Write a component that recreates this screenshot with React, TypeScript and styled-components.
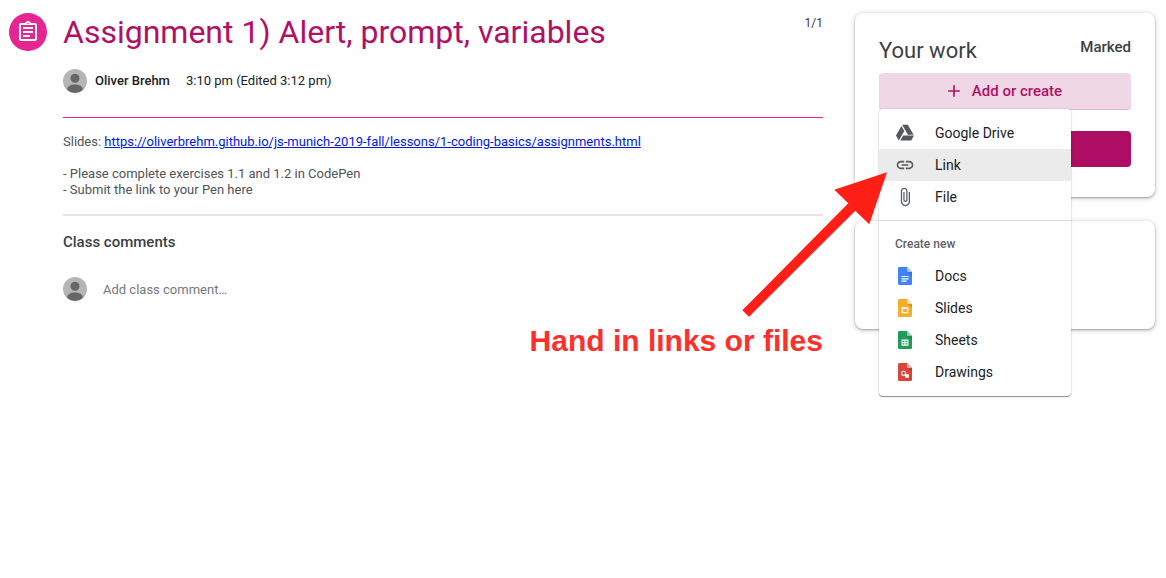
import React from "react";
import styled, { createGlobalStyle } from "styled-components";
import { MdOutlineAssignment, MdLink, MdAttachFile, MdAdd } from "react-icons/md";

const text = `Roboto, "Liberation Sans", sans-serif`;

const GlobalStyle = createGlobalStyle`
  *, *::before, *::after { box-sizing: border-box; }
  body { margin: 0; background: #fff; color: #202124; font-family: ${text}; font-size: 14px; }
  h1, h2, p { margin: 0; }
  button, input { font: inherit; }
`;

const Page = styled.div`
  display: flex;
  align-items: flex-start;
  gap: 32px;
  min-height: 100vh;
  padding: 12px 11px 24px 9px;
`;

const Main = styled.main`
  flex: 1;
  min-width: 0;
  display: flex;
  gap: 16px;
`;

const Badge = styled.span`
  flex: none;
  display: flex;
  align-items: center;
  justify-content: center;
  width: 38px;
  height: 38px;
  margin-top: 1px;
  border-radius: 50%;
  background: #e52592;
  color: #fff;
`;

const Content = styled.div`
  flex: 1;
  min-width: 0;
`;

const TitleRow = styled.header`
  display: flex;
  justify-content: space-between;
  align-items: flex-start;
`;

const Title = styled.h1`
  font-size: 32px;
  font-weight: 400;
  line-height: 40px;
  color: #b01065;
`;

const Score = styled.span`
  font-size: 12px;
  line-height: 22px;
  color: #3c4043;
`;

const Meta = styled.div`
  display: flex;
  align-items: center;
  margin-top: 17px;
  padding-bottom: 24px;
  border-bottom: 1px solid #e52592;
  font-size: 13px;
  line-height: 24px;
`;

const AvatarIcon = styled.svg`
  flex: none;
  width: 24px;
  height: 24px;
`;

const Author = styled.span`
  margin: 0 16px 0 8px;
  font-weight: 500;
`;

const Instructions = styled.section`
  padding: 16px 0;
  border-bottom: 2px solid #e4e5ea;
  font-size: 13px;
  line-height: 16px;
  color: #505357;
`;

const Paragraph = styled.p`
  & + & { margin-top: 16px; }
`;

const SlidesLink = styled.a`
  color: #0019e0;
`;

const CommentsTitle = styled.h2`
  margin: 16px 0 25px;
  font-size: 15px;
  font-weight: 500;
  line-height: 20px;
  color: #3c4043;
`;

const CommentForm = styled.form`
  display: flex;
  align-items: center;
  gap: 16px;
`;

const CommentInput = styled.input`
  flex: 1;
  min-width: 0;
  height: 24px;
  padding: 0;
  border: 0;
  outline: 0;
  background: none;
  color: #3c4043;
  font-size: 13px;
  &::placeholder { color: #75787c; opacity: 1; }
`;

const Sidebar = styled.aside`
  flex: none;
  display: flex;
  flex-direction: column;
  gap: 24px;
  width: 300px;
  padding-top: 1px;
`;

const Card = styled.section`
  border-radius: 8px;
  background: #fff;
  box-shadow: 0 1px 2px rgba(60, 64, 67, 0.4), 0 1px 5px 1px rgba(60, 64, 67, 0.18);
`;

const WorkCard = styled(Card)`
  padding: 24px 24px 30px;
`;

const CommentsCard = styled(Card)`
  min-height: 108px;
`;

const CardHeader = styled.div`
  display: flex;
  justify-content: space-between;
  align-items: flex-start;
  height: 36px;
`;

const CardTitle = styled.h2`
  font-size: 22px;
  font-weight: 400;
  line-height: 28px;
  color: #3c4043;
`;

const Status = styled.span`
  font-size: 15px;
  font-weight: 500;
  line-height: 20px;
  color: #3c4043;
`;

const MenuAnchor = styled.div`
  position: relative;
`;

const WideButton = styled.button<{ $filled?: boolean }>`
  display: flex;
  align-items: center;
  justify-content: center;
  gap: 8px;
  width: 100%;
  height: 36px;
  padding: 0 4px 0 0;
  border: 0;
  border-radius: 4px;
  font-size: 15px;
  font-weight: 500;
  color: ${(p) => (p.$filled ? "#fff" : "#b01065")};
  background: ${(p) => (p.$filled ? "#ad0d63" : "#f0d7e5")};
  box-shadow: ${(p) => (p.$filled ? "none" : "0 1px 0 #e5b3d0")};
  & + & { margin-top: 22px; }
`;

const Menu = styled.div`
  position: absolute;
  z-index: 1;
  top: 36px;
  left: 0;
  width: 192px;
  padding: 8px 0;
  border-radius: 4px;
  background: #fff;
  box-shadow: 0 1px 1px rgba(0, 0, 0, 0.42), 0 0 2px rgba(0, 0, 0, 0.2);
`;

const MenuItem = styled.button<{ $active?: boolean }>`
  display: flex;
  align-items: center;
  gap: 20px;
  width: 100%;
  height: 32px;
  padding: 0 16px;
  border: 0;
  background: ${(p) => (p.$active ? "#ebebeb" : "transparent")};
  color: #202124;
  font-size: 14px;
  text-align: left;
`;

const IconSlot = styled.span`
  display: flex;
  align-items: center;
  justify-content: center;
  width: 20px;
  height: 20px;
  color: #55595e;
`;

const MenuGroup = styled.div`
  & + & {
    margin-top: 7px;
    padding-top: 7px;
    border-top: 1px solid #dcdcdc;
  }
`;

const GroupLabel = styled.div`
  padding: 0 16px;
  font-size: 12px;
  font-weight: 500;
  line-height: 32px;
  color: #5f6368;
`;

const Callout = styled.div`
  position: absolute;
  z-index: 2;
  top: 99px;
  right: 244px;
  width: 360px;
  pointer-events: none;
`;

const Arrow = styled.svg`
  display: block;
  width: 146px;
  height: 146px;
  margin-left: auto;
`;

const CalloutText = styled.p`
  margin-top: 5px;
  margin-right: 64px;
  text-align: right;
  white-space: nowrap;
  color: #ff2f2c;
  font-family: "Liberation Sans", Arial, sans-serif;
  font-size: 30px;
  font-weight: 700;
  line-height: 36px;
`;

const Avatar = () => (
  <AvatarIcon viewBox="0 0 24 24" aria-hidden="true">
    <circle cx="12" cy="12" r="12" fill="#b5b5b5" />
    <circle cx="12" cy="9.3" r="4.5" fill="#666" />
    <path d="M4.2 20.2C4.2 17 8 15.4 12 15.4s7.800 1.600 7.800 4.800v.8A12 12 0 0 1 12 24a12 12 0 0 1-7.800-3z" fill="#666" />
  </AvatarIcon>
);

const DriveIcon = () => (
  <svg width="20" height="20" viewBox="0 0 24 24" fill="currentColor" aria-hidden="true">
    <path d="M7.710 3.500 1.150 15l3.430 6 6.550-11.500zM9.730 15 6.300 21h13.120l3.430-6zM22.280 14 15.420 2H8.580l6.850 12z" />
  </svg>
);

const marks = {
  docs: <path d="M3.500 9.500h7M3.500 11.800h7M3.500 14.200h5" stroke="#fff" strokeWidth="1.200" />,
  slides: <path d="M4.400 9h5.200v4.600H4.400z" fill="none" stroke="#fff" strokeWidth="1.400" />,
  sheets: <path d="M4.100 9.100h5.800v5H4.100zM7 9v5M4 11.600h6" fill="none" stroke="#fff" strokeWidth="1.100" />,
  drawings: (
    <>
      <circle cx="5.600" cy="10.300" r="2" fill="none" stroke="#fff" strokeWidth="1.100" />
      <path d="M7.200 11.200h3.600v3.600H7.200z" fill="#fff" />
    </>
  ),
};

type FileKind = keyof typeof marks;

const FileIcon = ({ kind, color, fold }: { kind: FileKind; color: string; fold: string }) => (
  <svg width="14" height="18" viewBox="0 0 14 18" aria-hidden="true">
    <path d="M1.200 0H9l5 5v11.800A1.200 1.200 0 0 1 12.800 18H1.200A1.200 1.200 0 0 1 0 16.800V1.200A1.200 1.200 0 0 1 1.200 0z" fill={color} />
    <path d="M9 5h5v4z" fill="#000" opacity=".12" />
    <path d="M9 0l5 5H10.200A1.200 1.200 0 0 1 9 3.800z" fill={fold} />
    {marks[kind]}
  </svg>
);

const files: { label: string; kind: FileKind; color: string; fold: string }[] = [
  { label: "Docs", kind: "docs", color: "#4283f3", fold: "#a6c5fa" },
  { label: "Slides", kind: "slides", color: "#f4ae2b", fold: "#fadb9b" },
  { label: "Sheets", kind: "sheets", color: "#219b5a", fold: "#8fd0ae" },
  { label: "Drawings", kind: "drawings", color: "#da453b", fold: "#eea49e" },
];

const attachments = [
  { label: "Google Drive", icon: <DriveIcon /> },
  { label: "Link", icon: <MdLink size={20} />, active: true },
  { label: "File", icon: <MdAttachFile size={20} /> },
];

const slidesUrl = "https://oliverbrehm.github.io/js-munich-2019-fall/lessons/1-coding-basics/assignments.html";

export default function App() {
  return (
    <>
      <GlobalStyle />
      <Page>
        <Main>
          <Badge><MdOutlineAssignment size={24} /></Badge>
          <Content>
            <TitleRow>
              <Title>Assignment 1) Alert, prompt, variables</Title>
              <Score>1/1</Score>
            </TitleRow>
            <Meta>
              <Avatar />
              <Author>Oliver Brehm</Author>
              <span>3:10 pm (Edited 3:12 pm)</span>
            </Meta>
            <Instructions>
              <Paragraph>Slides: <SlidesLink href={slidesUrl}>{slidesUrl}</SlidesLink></Paragraph>
              <Paragraph>
                - Please complete exercises 1.1 and 1.2 in CodePen<br />
                - Submit the link to your Pen here
              </Paragraph>
            </Instructions>
            <CommentsTitle>Class comments</CommentsTitle>
            <CommentForm>
              <Avatar />
              <CommentInput aria-label="Add class comment" placeholder="Add class comment…" />
            </CommentForm>
          </Content>
        </Main>
        <Sidebar>
          <WorkCard>
            <CardHeader>
              <CardTitle>Your work</CardTitle>
              <Status>Marked</Status>
            </CardHeader>
            <MenuAnchor>
              <WideButton type="button" aria-haspopup="menu" aria-expanded="true">
                <MdAdd size={20} />
                Add or create
              </WideButton>
              <WideButton type="button" $filled aria-label="Resubmit" />
              <Menu role="menu">
                <MenuGroup>
                  {attachments.map((a) => (
                    <MenuItem key={a.label} type="button" role="menuitem" $active={a.active}>
                      <IconSlot>{a.icon}</IconSlot>
                      {a.label}
                    </MenuItem>
                  ))}
                </MenuGroup>
                <MenuGroup>
                  <GroupLabel>Create new</GroupLabel>
                  {files.map((f) => (
                    <MenuItem key={f.label} type="button" role="menuitem">
                      <IconSlot><FileIcon kind={f.kind} color={f.color} fold={f.fold} /></IconSlot>
                      {f.label}
                    </MenuItem>
                  ))}
                </MenuGroup>
              </Menu>
              <Callout>
                <Arrow viewBox="0 0 146 146" aria-hidden="true">
                  <path d="M1.300 138.300 107.300 31.300 93.300 17.700 146 .300 128.300 52.300 114.300 38.700 8 144.700z" fill="#ff1f17" />
                </Arrow>
                <CalloutText>Hand in links or files</CalloutText>
              </Callout>
            </MenuAnchor>
          </WorkCard>
          <CommentsCard />
        </Sidebar>
      </Page>
    </>
  );
}
